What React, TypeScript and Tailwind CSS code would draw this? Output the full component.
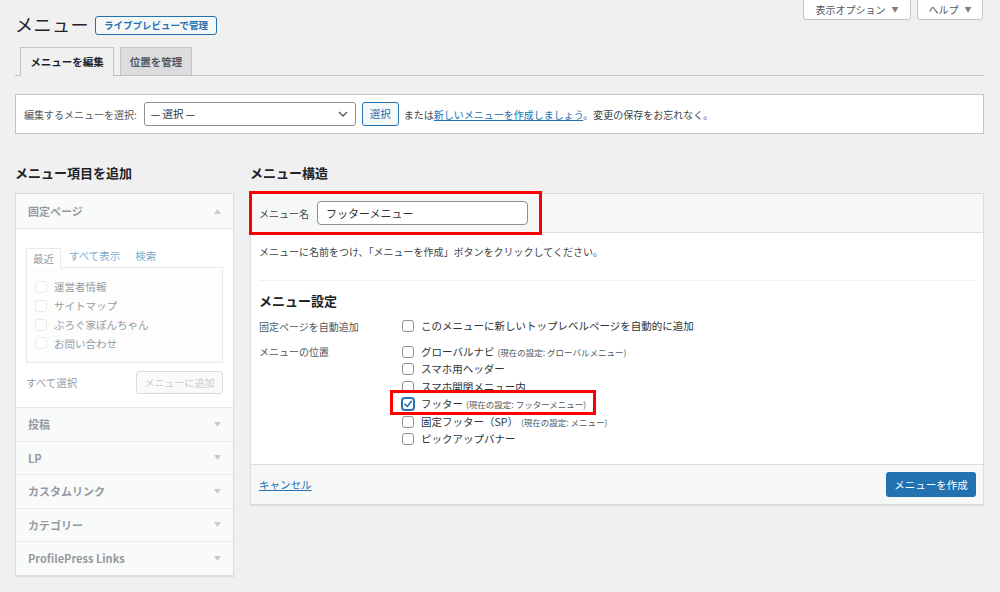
import React from "react";

const FONT = "font-['Noto_Sans_CJK_JP','Noto_Sans',sans-serif]";

function Cb({ checked = false, faint = false }: { checked?: boolean; faint?: boolean }) {
  return (
    <span
      className={
        "w-[12px] h-[12px] rounded-[3px] bg-white shrink-0 flex items-center justify-center border " +
        (checked
          ? "border-[#2271b1] shadow-[0_0_0_1px_#2271b1]"
          : faint
          ? "border-[#dcdcde]"
          : "border-[#8c8f94]")
      }
    >
      {checked && (
        <svg width="10" height="10" viewBox="0 0 10 10">
          <path d="M2 5.2 L4.2 7.4 L8.2 2.4" fill="none" stroke="#2271b1" strokeWidth="1.6" strokeLinecap="round" strokeLinejoin="round" />
        </svg>
      )}
    </span>
  );
}

function Tri({ up = false }: { up?: boolean }) {
  return (
    <svg width="7" height="5" viewBox="0 0 7 5" className="shrink-0">
      {up ? <path d="M0 5 L3.5 0 L7 5 Z" fill="#a7aaad" /> : <path d="M0 0 L7 0 L3.5 5 Z" fill="#a7aaad" />}
    </svg>
  );
}

function AccRow({ label }: { label: string }) {
  return (
    <div className="h-[33.5px] border-t border-[#dcdcde] bg-[#f6f7f7] flex items-center justify-between pl-[12px] pr-[12px]">
      <span className="text-[11px] font-semibold text-[#50575e]">{label}</span>
      <Tri />
    </div>
  );
}

function Loc({ label, note }: { label: string; note?: string }) {
  return (
    <div className="h-[17.5px] flex items-center gap-[7px]">
      <Cb />
      <span className="text-[10.5px] text-[#2c3338] leading-none whitespace-nowrap">
        {label}
        {note && <span className="text-[8.5px] text-[#50575e] ml-[3px]">{note}</span>}
      </span>
    </div>
  );
}

export default function App() {
  return (
    <div className={"w-[1000px] h-[592px] overflow-hidden bg-[#f0f0f1] text-[#3c434a] pl-[15px] pr-[16px] " + FONT}>
      {/* header */}
      <div className="flex items-start justify-between">
        <div className="mt-[12px] h-[24px] flex items-center gap-[6px]">
          <h1 className="text-[18px] leading-[24px] text-[#1d2327] tracking-[0.5px]">メニュー</h1>
          <span className="h-[19px] px-[8px] flex items-center border border-[#2271b1] rounded-[3px] bg-[#f6f7f7] text-[9.5px] font-semibold text-[#2271b1] mt-[2px]">
            ライブプレビューで管理
          </span>
        </div>
        <div className="flex gap-[6px] mr-[1px]">
          <div className="w-[108px] h-[21px] -mt-px bg-white border border-[#c3c4c7] rounded-b-[3px] flex items-center justify-center gap-[6px] text-[10px] text-[#50575e]">
            表示オプション <span className="text-[7px] text-[#787c82]">▼</span>
          </div>
          <div className="w-[66px] h-[21px] -mt-px bg-white border border-[#c3c4c7] rounded-b-[3px] flex items-center justify-center gap-[6px] text-[10px] text-[#50575e]">
            ヘルプ <span className="text-[7px] text-[#787c82]">▼</span>
          </div>
        </div>
      </div>

      {/* tabs */}
      <div className="mt-[11px] flex items-end gap-[6px] pl-[5px] border-b border-[#c3c4c7] h-[29px]">
        <div className="h-[29px] -mb-px w-[94px] flex items-center justify-center bg-[#f0f0f1] border border-b-0 border-[#c3c4c7] text-[10.5px] font-bold text-[#1d2327]">
          メニューを編集
        </div>
        <div className="h-[28px] w-[72px] flex items-center justify-center bg-[#dcdcde] border border-b-0 border-[#c3c4c7] text-[10.5px] font-semibold text-[#50575e]">
          位置を管理
        </div>
      </div>

      {/* select menu */}
      <div className="mt-[18px] h-[40px] bg-white border border-[#c3c4c7] flex items-center pl-[8px] text-[10px]">
        <span className="text-[#50575e] mr-[7px]">編集するメニューを選択:</span>
        <div className="w-[212px] h-[24px] border border-[#8c8f94] rounded-[3px] bg-white flex items-center justify-between pl-[6px] pr-[7px] text-[10.5px] text-[#2c3338]">
          <span>— 選択 —</span>
          <svg width="10" height="6" viewBox="0 0 10 6">
            <path d="M1 1 L5 5 L9 1" fill="none" stroke="#50575e" strokeWidth="1.3" />
          </svg>
        </div>
        <div className="ml-[6px] w-[37px] h-[24px] border border-[#2271b1] rounded-[3px] bg-[#f6f7f7] flex items-center justify-center text-[#2271b1] text-[10.5px]">
          選択
        </div>
        <span className="ml-[5px] text-[#3c434a]">
          または<span className="text-[#2271b1] underline">新しいメニューを作成しましょう</span>。変更の保存をお忘れなく。
        </span>
      </div>

      {/* columns */}
      <div className="flex gap-[16px] mt-[30px]">
        {/* left */}
        <div className="w-[219px] shrink-0">
          <h2 className="text-[13px] leading-[18px] font-bold text-[#1d2327]">メニュー項目を追加</h2>
          <div className="mt-[11px] border border-[#dcdcde] shadow-[0_1px_1px_rgba(0,0,0,0.08)] bg-white">
            <div className="opacity-60">
              <div className="h-[34px] bg-[#f6f7f7] flex items-center justify-between px-[12px]">
                <span className="text-[11px] font-semibold text-[#50575e]">固定ページ</span>
                <Tri up />
              </div>
              <div className="border-t border-[#dcdcde] bg-white pt-[18px] pb-[13px] px-[10px]">
                <div className="flex items-end text-[10.5px] h-[20px]">
                  <div className="h-[20px] -mb-px px-[6px] flex items-center border border-b-0 border-[#dcdcde] bg-white text-[#50575e] relative z-10">
                    最近
                  </div>
                  <span className="ml-[8px] mb-[3px] text-[#2271b1]">すべて表示</span>
                  <span className="ml-[15px] mb-[3px] text-[#2271b1]">検索</span>
                </div>
                <div className="h-[96px] border border-[#dcdcde] bg-[#fcfcfc] pt-[10px] pl-[8px] flex flex-col">
                  {["運営者情報", "サイトマップ", "ぶろぐ家ぽんちゃん", "お問い合わせ"].map((t) => (
                    <div key={t} className="h-[18.7px] flex items-center gap-[7px] text-[10.5px] text-[#50575e]">
                      <Cb faint />
                      <span>{t}</span>
                    </div>
                  ))}
                </div>
                <div className="mt-[8px] flex items-center justify-between">
                  <span className="text-[10.5px] text-[#50575e]">すべて選択</span>
                  <div className="w-[87px] h-[23px] border border-[#c3c4c7] rounded-[3px] bg-[#f6f7f7] flex items-center justify-center text-[10px] text-[#a7aaad]">
                    メニューに追加
                  </div>
                </div>
              </div>
              <AccRow label="投稿" />
              <AccRow label="LP" />
              <AccRow label="カスタムリンク" />
              <AccRow label="カテゴリー" />
              <AccRow label="ProfilePress Links" />
            </div>
          </div>
        </div>

        {/* right */}
        <div className="w-[734px] shrink-0">
          <h2 className="text-[13px] leading-[18px] font-bold text-[#1d2327]">メニュー構造</h2>
          <div className="mt-[11px] border border-[#dcdcde] shadow-[0_1px_1px_rgba(0,0,0,0.08)] bg-white relative">
            <div className="absolute left-[-2px] top-[-3px] w-[293px] h-[44px] border-[3px] border-[#ff0000] pointer-events-none z-20" />
            <div className="h-[39px] bg-[#f6f7f7] border-b border-[#dcdcde] flex items-center pl-[8px]">
              <span className="text-[10px] text-[#3c434a] mr-[8px]">メニュー名</span>
              <div className="w-[211px] h-[24px] border border-[#8c8f94] rounded-[4px] bg-white flex items-center pl-[8px] text-[11px] text-[#2c3338]">
                フッターメニュー
              </div>
            </div>
            <div className="px-[8px] pt-[12px] pb-[16px] bg-white">
              <p className="text-[10px] leading-[14px] text-[#3c434a]">
                メニューに名前をつけ、「メニューを作成」ボタンをクリックしてください。
              </p>
              <div className="mt-[21px] h-px bg-[#f0f0f1]" />
              <h3 className="mt-[11px] text-[13px] leading-[18px] font-bold text-[#1d2327]">メニュー設定</h3>
              <div className="mt-[7px] flex h-[18px] items-center">
                <span className="w-[143px] text-[10px] text-[#50575e]">固定ページを自動追加</span>
                <div className="flex items-center gap-[7px]">
                  <Cb />
                  <span className="text-[10.5px] text-[#2c3338]">このメニューに新しいトップレベルページを自動的に追加</span>
                </div>
              </div>
              <div className="mt-[8px] flex">
                <span className="w-[143px] text-[10px] text-[#50575e] leading-[17.5px]">メニューの位置</span>
                <div className="flex flex-col">
                  <Loc label="グローバルナビ" note="(現在の設定: グローバルメニュー)" />
                  <Loc label="スマホ用ヘッダー" />
                  <Loc label="スマホ開閉メニュー内" />
                  <div className="relative h-[17.5px]">
                    <div className="absolute left-[-12px] top-[-6px] w-[206px] h-[25px] border-[3px] border-[#ff0000] bg-white" />
                    <div className="relative z-10 h-[17.5px] flex items-center gap-[7px]">
                      <Cb checked />
                      <span className="text-[10.5px] text-[#2c3338] leading-none whitespace-nowrap">
                        フッター<span className="text-[8.5px] text-[#50575e] ml-[3px]">(現在の設定: フッターメニュー)</span>
                      </span>
                    </div>
                  </div>
                  <Loc label="固定フッター（SP）" note="(現在の設定: メニュー)" />
                  <Loc label="ピックアップバナー" />
                </div>
              </div>
            </div>
            <div className="h-[40px] border-t border-[#dcdcde] bg-[#f6f7f7] flex items-center justify-between pl-[8px] pr-[7px]">
              <span className="text-[10.5px] text-[#2271b1] underline">キャンセル</span>
              <div className="w-[90px] h-[25px] rounded-[3px] bg-[#2271b1] flex items-center justify-center text-[10.5px] text-white">
                メニューを作成
              </div>
            </div>
          </div>
        </div>
      </div>
    </div>
  );
}
